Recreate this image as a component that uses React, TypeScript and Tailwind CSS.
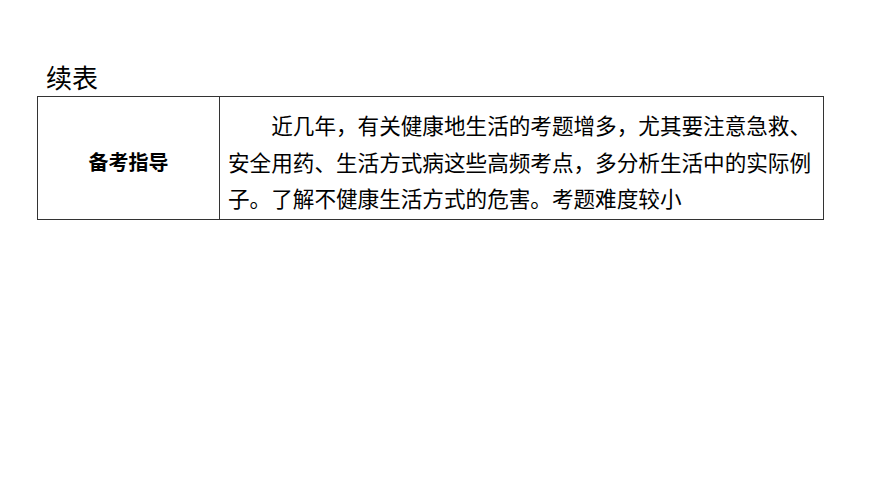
export default function App() {
  return (
    <div className="h-[489px] w-[870px] bg-white font-['Noto_Sans_CJK_SC',sans-serif] text-black">
      <div className="pl-[46px] pt-[60px] text-[26px] leading-[34px]">续表</div>
      <div className="ml-[37px] mt-[2px] flex w-[787px] border-[1.5px] border-[#333]">
        <div className="flex w-[182px] shrink-0 items-center justify-center border-r-[1.5px] border-[#333] pt-[8px] text-[20px] font-semibold">
          备考指导
        </div>
        <p className="pb-[2px] pl-[8px] pr-[6px] pt-[10px] indent-[2em] text-[21.6px] leading-[36.5px]">
          近几年，有关健康地生活的考题增多，尤其要注意急救、安全用药、生活方式病这些高频考点，多分析生活中的实际例子。了解不健康生活方式的危害。考题难度较小
        </p>
      </div>
    </div>
  );
}
